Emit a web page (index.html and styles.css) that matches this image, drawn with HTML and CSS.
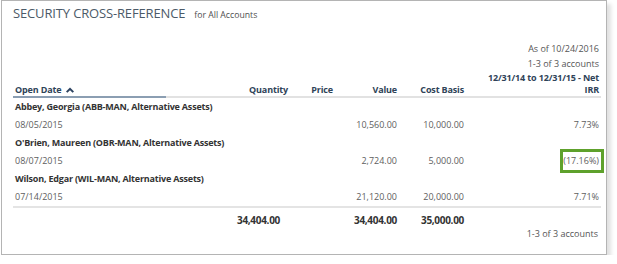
FILE: index.html
```html
<!DOCTYPE html>
<html lang="en">
<head>
    <meta charset="UTF-8">
    <title>Security Cross-Reference</title>
    <link rel="stylesheet" href="styles.css">
</head>
<body>
    <div class="panel">
        <div class="panel-title">
            <h1>SECURITY CROSS-REFERENCE</h1>
            <span class="scope">for All Accounts</span>
        </div>

        <div class="report-meta">
            <div>As of 10/24/2016</div>
            <div>1-3 of 3 accounts</div>
        </div>

        <table class="report">
            <colgroup>
                <col class="c-date">
                <col class="c-qty">
                <col class="c-price">
                <col class="c-value">
                <col class="c-cost">
                <col class="c-irr">
            </colgroup>
            <thead>
                <tr>
                    <th class="sorted">Open Date
                        <svg class="sort-icon" width="8" height="6" viewBox="0 0 8 6">
                            <path d="M0 4.6 L4 0.6 L8 4.6 L6.6 5.8 L4 3.3 L1.4 5.8 Z" fill="#2c4260"/>
                        </svg>
                    </th>
                    <th class="num">Quantity</th>
                    <th class="num">Price</th>
                    <th class="num">Value</th>
                    <th class="num">Cost Basis</th>
                    <th class="num">12/31/14 to 12/31/15 - Net<br>IRR</th>
                </tr>
            </thead>
            <tbody>
                <tr class="group">
                    <td colspan="6">Abbey, Georgia (ABB-MAN, Alternative Assets)</td>
                </tr>
                <tr class="detail">
                    <td>08/05/2015</td>
                    <td class="num"></td>
                    <td class="num"></td>
                    <td class="num">10,560.00</td>
                    <td class="num">10,000.00</td>
                    <td class="num">7.73%</td>
                </tr>
                <tr class="group">
                    <td colspan="6">O'Brien, Maureen (OBR-MAN, Alternative Assets)</td>
                </tr>
                <tr class="detail">
                    <td>08/07/2015</td>
                    <td class="num"></td>
                    <td class="num"></td>
                    <td class="num">2,724.00</td>
                    <td class="num">5,000.00</td>
                    <td class="num highlight-cell"><span class="highlight"></span>(17.16%)</td>
                </tr>
                <tr class="group">
                    <td colspan="6">Wilson, Edgar (WIL-MAN, Alternative Assets)</td>
                </tr>
                <tr class="detail">
                    <td>07/14/2015</td>
                    <td class="num"></td>
                    <td class="num"></td>
                    <td class="num">21,120.00</td>
                    <td class="num">20,000.00</td>
                    <td class="num">7.71%</td>
                </tr>
            </tbody>
            <tfoot>
                <tr>
                    <td></td>
                    <td class="num qty-total">34,404.00</td>
                    <td></td>
                    <td class="num">34,404.00</td>
                    <td class="num">35,000.00</td>
                    <td></td>
                </tr>
            </tfoot>
        </table>

        <div class="report-footer">1-3 of 3 accounts</div>
    </div>
</body>
</html>
```

FILE: styles.css
```css
body {
    margin: 0;
    background-color: #ffffff;
    font-family: "Open Sans", "Noto Sans", sans-serif;
    color: #5a5a5a;
}

.panel {
    box-sizing: border-box;
    width: 606px;
    height: 255px;
    margin-left: 1px;
    padding: 0 5px 0 11px;
    border: 1px solid #b4b4b4;
    background-color: #ffffff;
    box-shadow: 4px 4px 4px rgba(0, 0, 0, 0.12);
}

.panel-title {
    display: flex;
    align-items: baseline;
    gap: 9px;
    padding-top: 3px;
    height: 24px;
}

.panel-title h1 {
    margin: 0;
    font-size: 13px;
    font-weight: 400;
    color: #4c5a68;
    letter-spacing: -0.15px;
}

.scope {
    font-size: 8.7px;
    color: #4f4f4f;
}

.report-meta {
    margin-top: 13px;
    text-align: right;
    font-size: 9px;
    line-height: 15px;
    padding-right: 2px;
    color: #555;
}

.report {
    width: 588px;
    border-collapse: collapse;
    table-layout: fixed;
    font-size: 9px;
}

.c-date { width: 153px; }
.c-qty { width: 124px; }
.c-price { width: 45px; }
.c-value { width: 64px; }
.c-cost { width: 67px; }
.c-irr { width: 135px; }

.report th {
    padding: 1px 2px 0 2px;
    vertical-align: bottom;
    text-align: left;
    font-weight: 700;
    color: #2f4358;
    line-height: 12px;
    letter-spacing: -0.15px;
    border-bottom: 2px solid #e2e2e2;
}

.report th.sorted {
    border-bottom-color: #8b9eb2;
}

.sort-icon {
    margin-left: 2px;
    vertical-align: 0;
}

.report th.num,
.report td.num {
    text-align: right;
}

.report td {
    padding: 0 2px;
    white-space: nowrap;
}

.group td {
    height: 17px;
    font-weight: 700;
    color: #333;
    letter-spacing: -0.2px;
}

.detail td {
    height: 19px;
    color: #5e5e5e;
}

.report tfoot td {
    padding-top: 5px;
    height: 13px;
    vertical-align: top;
    border-top: 2px solid #e4e4e4;
    font-size: 10px;
    font-weight: 700;
    letter-spacing: -0.3px;
    color: #333;
}

.report tfoot td.qty-total {
    padding-right: 10px;
}

.highlight-cell {
    position: relative;
}

.highlight {
    position: absolute;
    right: -3px;
    top: -2px;
    width: 38px;
    height: 18px;
    border: 3px solid #5ea12c;
}

.report-footer {
    margin-top: 0;
    text-align: right;
    font-size: 9px;
    padding-right: 3px;
    color: #555;
}
```
